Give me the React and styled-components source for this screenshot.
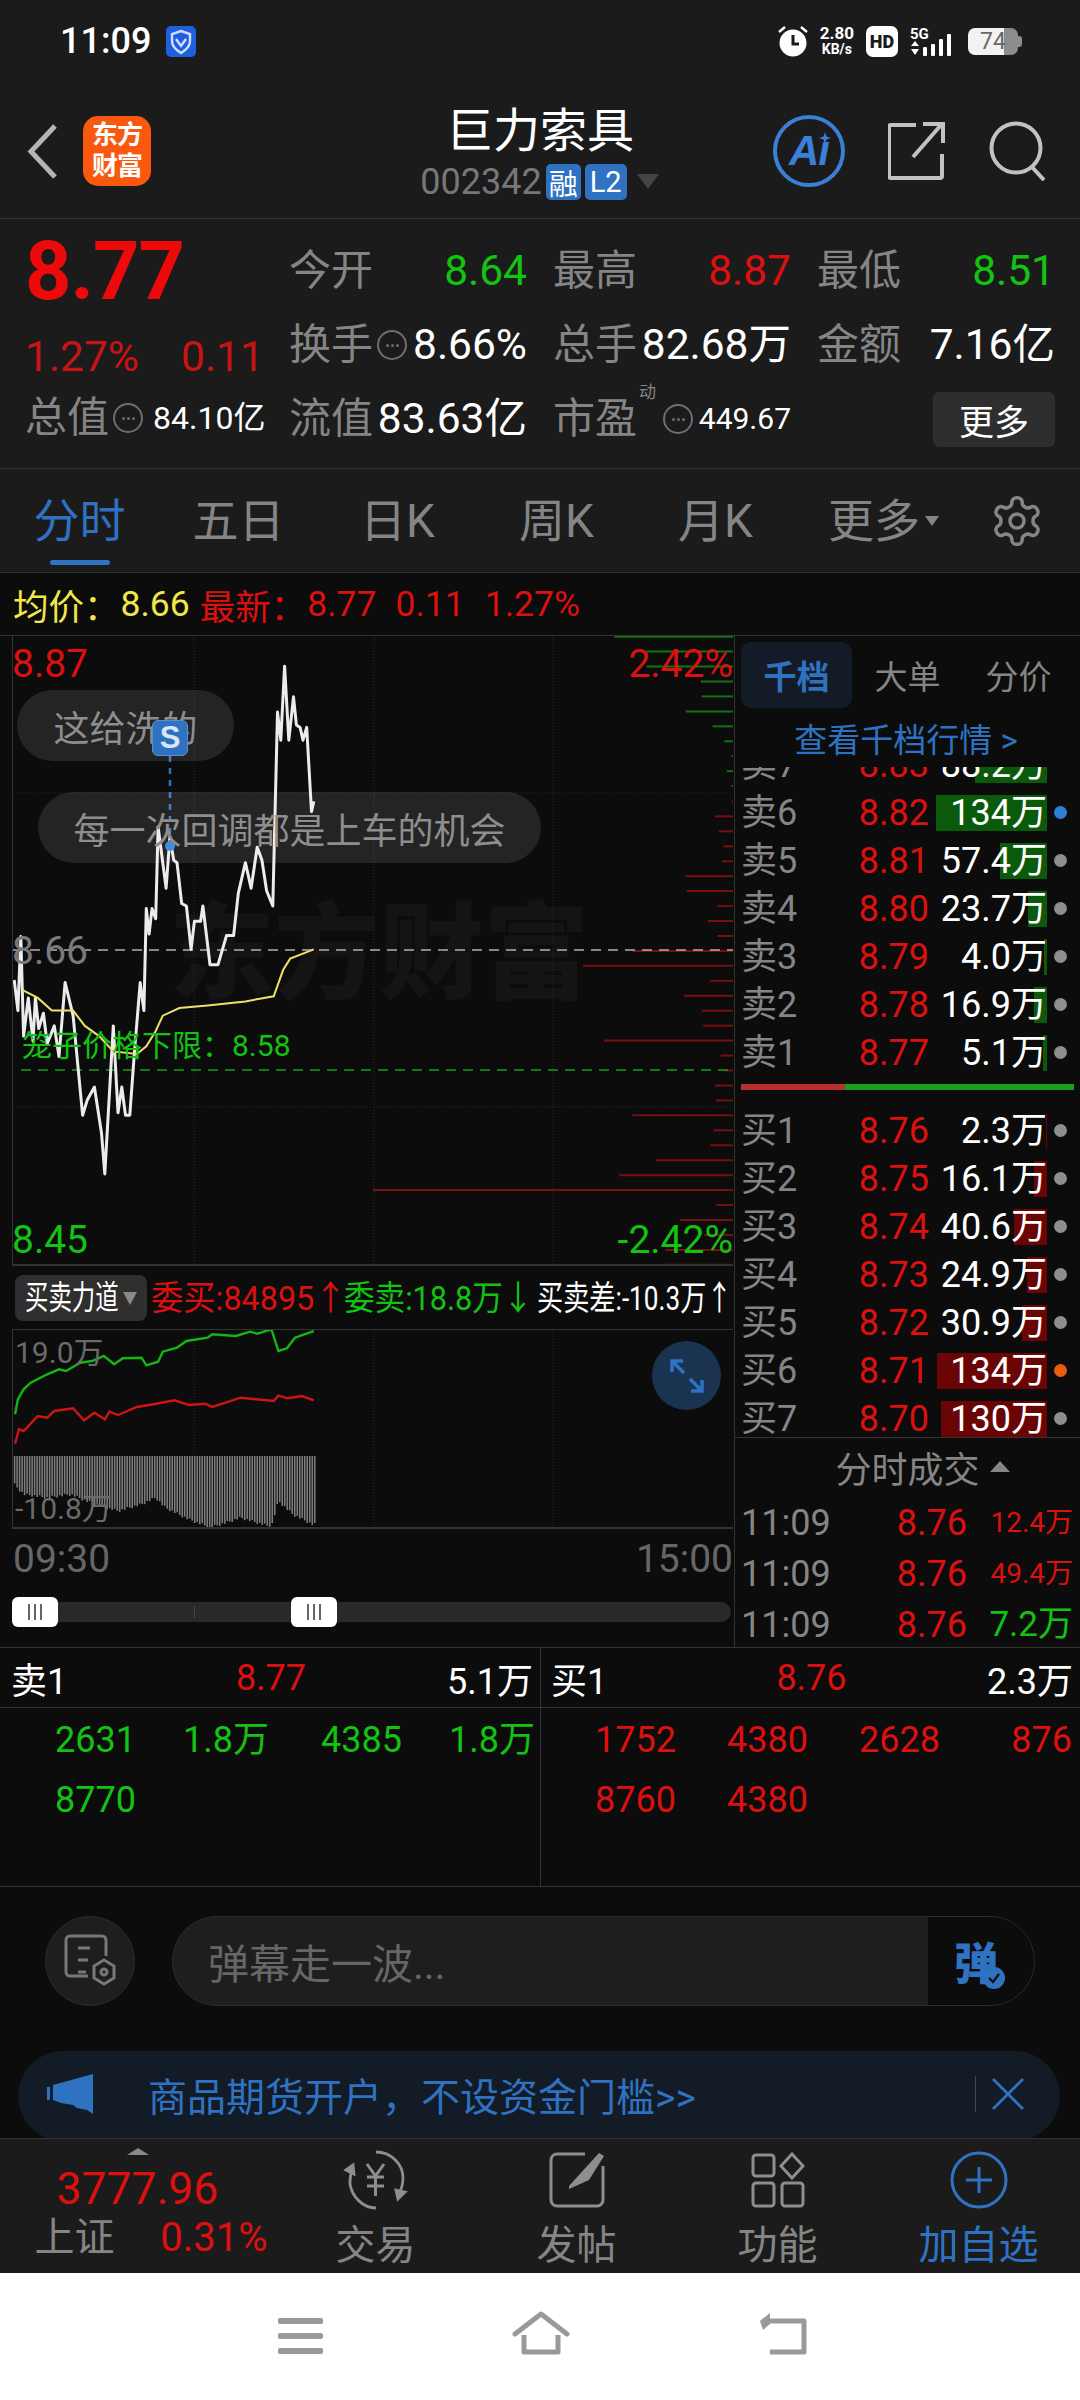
import React from "react";
import styled, { createGlobalStyle } from "styled-components";

const RED = "#dd1010";
const GREEN = "#14c214";
const BLUE = "#2f72c2";
const GRAY = "#858585";
const PANEL = "#0c0c0c";
const BAR = "#1b1b1b";
const LINE = "#333333";

const Global = createGlobalStyle`
  html, body { margin: 0; padding: 0; background: ${PANEL}; }
  * { box-sizing: border-box; }
  body { font-family: Roboto, "Noto Sans CJK SC", sans-serif; }
`;

const Page = styled.div`
  width: 1080px; height: 2400px; overflow: hidden; display: flex; flex-direction: column;
  background: ${PANEL}; color: #fff; font-family: Roboto, "Noto Sans CJK SC", sans-serif;
`;

/* status bar */
const StatusBar = styled.div`
  height: 80px; background: ${BAR}; display: flex; align-items: center; padding: 2px 62px 0 60px; flex: none;
`;
const Clock = styled.span`font-size: 36px; font-weight: 500; color: #fff; margin-right: 15px;`;
const StatusRight = styled.div`margin-left: auto; display: flex; align-items: center; gap: 12px;`;
const Speed = styled.div`
  display: flex; flex-direction: column; align-items: center; font-weight: 700; color: #fff; line-height: 16px;
  span:first-child { font-size: 17px; } span:last-child { font-size: 14px; }
`;
const HdBadge = styled.span`
  width: 32px; height: 31px; border-radius: 7px; background: #fff; color: ${BAR}; font-size: 18px; font-weight: 900;
  display: flex; align-items: center; justify-content: center;
`;
const Battery = styled.div`
  position: relative; width: 50px; height: 27px; border-radius: 7px; margin-left: 0;
  background: linear-gradient(90deg, #f2f2f2 72%, #8c8c8c 72%); color: #666; font-size: 23px; display: flex; align-items: center; justify-content: center;
  &::after { content: ""; position: absolute; right: -4px; top: 8px; width: 4px; height: 11px; border-radius: 0 3px 3px 0; background: #8c8c8c; }
`;

/* header */
const Header = styled.header`
  height: 139px; flex: none; background: ${BAR}; border-bottom: 1px solid ${LINE}; display: grid; grid-template-columns: 270px 1fr 270px; align-items: center;
`;
const HeaderLeft = styled.div`display: flex; align-items: center; padding: 4px 0 0 27px; gap: 25px;`;
const Logo = styled.div`
  width: 68px; height: 70px; border-radius: 15px; background: #f8590f; color: #fff; font-weight: 700; font-size: 26px; line-height: 31px; text-align: center; padding-top: 4px; letter-spacing: -1px;
`;
const TitleBlock = styled.div`display: flex; flex-direction: column; align-items: center; padding-top: 9px;`;
const Title = styled.div`font-size: 47px; line-height: 56px; color: #fff; margin-top: -3px;`;
const CodeLine = styled.div`display: flex; align-items: center; gap: 4px; height: 40px; margin-top: 3px; margin-left: -1px;`;
const Code = styled.span`font-size: 36px; color: #777;`;
const Tag = styled.span`
  height: 36px; border-radius: 5px; background: ${BLUE}; color: #fff; font-size: ${p => p.$s || 28}px; padding: 0 ${p => p.$pad || 4}px; display: flex; align-items: center;
`;
const Caret = styled.span`
  width: 0; height: 0; border-left: 11px solid transparent; border-right: 11px solid transparent; border-top: 15px solid #444; margin-left: 6px;
`;
const HeaderRight = styled.div`display: flex; align-items: center; padding: 4px 0 0 0; margin-left: -37px; gap: 43px;`;
const AiCircle = styled.div`
  position: relative; width: 72px; height: 72px; border-radius: 50%; border: 4px solid #3a7fd8; color: #3a7fd8; font-size: 42px; font-weight: 900; font-style: italic; display: flex; align-items: center; justify-content: center; font-family: "Liberation Sans", sans-serif; flex: none; letter-spacing: -1px;
`;
const AiSpark = styled.svg`position: absolute; right: 10px; top: 13px;`;

/* quote */
const Quote = styled.section`
  height: 250px; flex: none; background: ${BAR}; border-bottom: 1px solid ${LINE}; display: grid; grid-template-columns: 289px 1fr; padding-top: 15px;
`;
const QuoteLeft = styled.div`padding-left: 25px; display: flex; flex-direction: column;`;
const BigPrice = styled.div`font-size: 81px; font-weight: 700; color: #ee0a0a; line-height: 74px; height: 78px; margin-top: 1px; letter-spacing: -1px;`;
const ChangeLine = styled.div`display: flex; gap: 42px; font-size: 42.5px; color: #c81414; line-height: 60px; margin-top: 14px;`;
const CapLine = styled.div`display: flex; align-items: center; height: 60px; margin-top: 1px;`;
const Stats = styled.div`display: grid; grid-template-columns: repeat(3, 238px); column-gap: 26px; grid-auto-rows: 74px; padding-top: 0;`;
const Stat = styled.div`display: flex; align-items: center; justify-content: space-between; white-space: nowrap;`;
const Label = styled.span`font-size: 42px; color: ${GRAY}; line-height: 1;`;
const LabelWrap = styled.span`display: flex; align-items: center; gap: 4px; position: relative;`;
const Sup = styled.sup`position: absolute; left: 86px; top: -14px; font-size: 17px; color: ${GRAY}; line-height: 1;`;
const Value = styled.span`font-size: ${p => p.$s || 42.5}px; color: ${p => p.$c || "#fff"}; line-height: 1; margin-left: ${p => p.$m || 0}px;`;
const More = styled.button`
  width: 122px; height: 55px; border: 0; border-radius: 6px; background: #2e2e2e; color: #fff; font: inherit; font-size: 35px; margin-left: 116px; padding: 0; font-family: Roboto, "Noto Sans CJK SC", sans-serif;
`;
const Dots = styled.span`
  width: 30px; height: 30px; border-radius: 50%; border: 2px solid #6e6e6e; display: inline-flex; align-items: center; justify-content: center; gap: 2px; flex: none; margin-left: ${p => p.$m || 0}px;
  i { width: 3px; height: 3px; border-radius: 50%; background: #6e6e6e; display: block; }
`;
const DotsIcon = ({ m }) => <Dots $m={m}><i /><i /><i /></Dots>;

/* tabs */
const Tabs = styled.nav`
  height: 104px; flex: none; background: ${BAR}; border-bottom: 1px solid ${LINE}; display: grid; grid-template-columns: repeat(6, 159px) 126px; align-items: center;
`;
const Tab = styled.div`
  position: relative; text-align: center; font-size: 46px; line-height: 1; color: ${p => (p.$on ? BLUE : GRAY)}; margin-top: 1px; margin-left: ${p => p.$m || 0}px; display: flex; justify-content: center; align-items: center;
  ${p => p.$on && `&::after { content: ""; position: absolute; left: 50px; width: 60px; height: 5px; border-radius: 3px; background: ${BLUE}; bottom: -21px; }`}
`;
const TabCaret = styled.span`
  width: 0; height: 0; border-left: 7px solid transparent; border-right: 7px solid transparent; border-top: 10px solid ${GRAY}; margin-left: 5px;
`;

/* average row */
const AvgRow = styled.div`
  height: 63px; flex: none; background: ${PANEL}; border-bottom: 1px solid ${LINE}; display: flex; align-items: center; font-size: 35.5px; padding-left: 13px; white-space: nowrap;
`;
const AvgPart = styled.span`color: ${p => p.$c}; margin-left: ${p => p.$m || 0}px;`;

/* middle */
const Middle = styled.div`height: 1012px; flex: none; display: flex; border-bottom: 1px solid ${LINE};`;
const LeftCol = styled.div`width: 734px; flex: none; display: flex; flex-direction: column;`;
const RightCol = styled.div`width: 346px; flex: none; border-left: 1px solid ${LINE}; display: flex; flex-direction: column; overflow: hidden;`;

const MainChart = styled.div`
  position: relative; height: 630px; flex: none; margin-left: 12px; width: 721px; border-left: 1px solid ${LINE}; border-bottom: 2px solid ${LINE}; overflow: hidden;
`;
const ChartSvg = styled.svg`position: absolute; left: 0; top: 0; display: block;`;
const Watermark = styled.div`
  position: absolute; left: 156px; top: 256px; font-size: 105px; font-weight: 900; color: #141414; line-height: 1.2; white-space: nowrap;
`;
const ChartLabel = styled.span`
  position: absolute; font-size: ${p => p.$s || 39}px; line-height: 1; color: ${p => p.$c}; white-space: nowrap;
  ${p => (p.$r !== undefined ? `right: ${p.$r}px;` : `left: ${p.$l}px;`)} top: ${p => p.$t}px;
`;
const Pill = styled.div`
  position: absolute; left: ${p => p.$l}px; top: ${p => p.$t}px; width: ${p => p.$w}px; height: 71px; border-radius: 36px; background: rgba(255,255,255,.1); color: #8e8e8e; font-size: 36px; display: flex; align-items: center; justify-content: center; white-space: nowrap;
`;
const SBadge = styled.div`
  position: absolute; left: 139px; top: 84px; width: 36px; height: 36px; border-radius: 6px; background: ${BLUE}; border: 1px solid #5d8fcc; color: #d8e6f8; font-size: 31px; font-weight: 900; display: flex; align-items: center; justify-content: center; font-family: "Liberation Sans", sans-serif;
`;

const ForceRow = styled.div`height: 63px; flex: none; display: flex; align-items: center; padding-left: 15px; white-space: nowrap;`;
const ForceSelect = styled.div`
  width: 132px; height: 46px; flex: none; border-radius: 8px; background: #2f2f2f; position: relative; overflow: hidden; margin-right: 4px;
`;
const Squeezed = styled.span`
  display: inline-block; transform: scaleX(${p => p.$sx}); transform-origin: left center; font-size: ${p => p.$s || 34}px; color: ${p => p.$c || "#fff"}; line-height: 46px;
`;
const SelectText = styled(Squeezed)`position: absolute; left: 10px; top: 0;`;
const SelectCaret = styled.span`
  position: absolute; right: 10px; top: 17px; width: 0; height: 0; border-left: 7px solid transparent; border-right: 7px solid transparent; border-top: 13px solid #8a8a8a;
`;
const ForceItem = styled.span`width: ${p => p.$w}px; flex: none; display: block; overflow: visible;`;

const SubChart = styled.div`
  position: relative; height: 200px; flex: none; margin-left: 12px; width: 721px; border-left: 1px solid ${LINE}; border-top: 1px solid ${LINE}; border-bottom: 2px solid ${LINE}; overflow: hidden;
`;
const Expand = styled.div`
  position: absolute; left: 639px; top: 11px; width: 69px; height: 69px; border-radius: 50%; background: #1a3350; display: flex; align-items: center; justify-content: center;
`;
const TimeRow = styled.div`
  height: 60px; flex: none; display: flex; justify-content: space-between; align-items: center; padding: 0 1px 0 13px; font-size: 39px; color: #666;
`;
const Slider = styled.div`position: relative; height: 30px; margin: 8px 3px 0 12px; flex: none;`;
const Track = styled.div`position: absolute; left: 0; right: 0; top: 5px; height: 20px; border-radius: 10px; background: #292929;`;
const Tick = styled.div`position: absolute; left: 182px; top: 9px; width: 1px; height: 12px; background: #444;`;
const Handle = styled.div`
  position: absolute; left: ${p => p.$l}px; top: 0; width: 46px; height: 30px; border-radius: 6px; background: #fff; display: flex; align-items: center; justify-content: center; gap: 4px;
  i { width: 2px; height: 16px; background: #666; display: block; }
`;

/* order book */
const BookTabs = styled.div`height: 72px; flex: none; display: grid; grid-template-columns: 111px 111px 111px; padding: 6px 0 0 6px;`;
const BookTab = styled.div`
  height: 66px; border-radius: 10px; background: ${p => (p.$on ? "#131c26" : "transparent")}; color: ${p => (p.$on ? BLUE : GRAY)}; font-size: 33px; font-weight: ${p => (p.$on ? 700 : 400)}; display: flex; align-items: center; justify-content: center;
`;
const BookLink = styled.div`height: 59px; flex: none; color: ${BLUE}; font-size: 33px; display: flex; align-items: center; justify-content: center; margin-left: -3px;`;
const SellList = styled.div`height: 310px; flex: none; overflow: hidden; display: flex; flex-direction: column; justify-content: flex-end;`;
const BuyList = styled.div`height: 330px; flex: none; overflow: hidden; display: flex; flex-direction: column;`;
const BookRow = styled.div`
  position: relative; height: 48px; flex: none; display: grid; grid-template-columns: 6px 70px 118px 118px 12px; align-items: center; font-size: 36px; line-height: 1; white-space: nowrap;
`;
const RowLabel = styled.span`grid-column: 2; color: ${GRAY}; position: relative;`;
const RowPrice = styled.span`color: ${RED}; text-align: right; position: relative;`;
const RowVol = styled.span`color: #fff; text-align: right; position: relative;`;
const VolBar = styled.span`
  position: absolute; right: 33px; top: 6px; height: 36px; background: ${p => (p.$sell ? "#0b5a0b" : "#6b0505")};
`;
const RowDot = styled.span`
  position: absolute; left: 319px; top: 17px; width: 13px; height: 13px; border-radius: 50%; background: ${p => p.$c || "#8e8e93"};
`;
const Ratio = styled.div`height: 6px; margin: 7px 6px 17px 6px; flex: none; display: flex;`;
const RatioPart = styled.span`height: 6px; background: ${p => p.$c}; flex: ${p => p.$f};`;
const TradesHead = styled.div`
  height: 60px; flex: none; border-top: 1px solid ${LINE}; color: ${GRAY}; font-size: 36px; display: flex; align-items: center; justify-content: center; gap: 10px; padding: 0 0 2px 30px;
`;
const UpTri = styled.span`
  width: 0; height: 0; border-left: ${p => p.$w}px solid transparent; border-right: ${p => p.$w}px solid transparent; border-bottom: ${p => p.$h}px solid ${p => p.$c};
`;
const TradeRow = styled.div`
  height: 51px; flex: none; display: grid; grid-template-columns: 6px 110px 116px 106px; align-items: center; line-height: 1; font-size: 36px; white-space: nowrap;
`;
const TradeTime = styled.span`grid-column: 2; color: ${GRAY};`;
const TradePrice = styled.span`color: ${RED}; text-align: right;`;
const TradeVol = styled.span`color: ${p => p.$c}; text-align: right; font-size: ${p => p.$s}px;`;

/* level 2 */
const Levels = styled.section`height: 239px; flex: none; display: grid; grid-template-columns: 541px 539px; border-bottom: 1px solid ${LINE};`;
const LevelSide = styled.div`border-right: ${p => (p.$first ? `1px solid ${LINE}` : "0")}; display: flex; flex-direction: column;`;
const LevelHead = styled.div`
  height: 60px; flex: none; border-bottom: 1px solid ${LINE}; display: grid; grid-template-columns: 1fr 1fr 1fr; align-items: center; font-size: 36px; padding: 0 ${p => p.$pr}px 0 ${p => p.$pl}px;
  span:nth-child(2) { color: ${RED}; text-align: center; margin-left: ${p => p.$mid}px; } span:nth-child(3) { text-align: right; }
`;
const LevelGrid = styled.div`
  display: grid; grid-template-columns: repeat(4, ${p => p.$col}px); grid-auto-rows: 60px; padding: 2px 0 0 ${p => p.$pl}px; align-items: center; font-size: 36px; color: ${p => p.$c}; text-align: right; line-height: 1;
`;

/* danmu */
const Danmu = styled.div`height: 120px; flex: none; display: flex; padding: 29px 0 0 45px; align-items: flex-start; gap: 37px;`;
const RoundBtn = styled.div`
  width: 90px; height: 90px; border-radius: 50%; background: #1e1e1e; border: 1px solid #2b2b2b; display: flex; align-items: center; justify-content: center; flex: none;
`;
const Input = styled.div`
  width: 863px; height: 90px; border-radius: 45px; background: #1e1e1e; border: 1px solid #2c2c2c; display: flex; overflow: hidden; flex: none;
`;
const Placeholder = styled.div`flex: 1; color: #666; font-size: 41px; display: flex; align-items: center; padding-left: 35px;`;
const SendBox = styled.div`
  position: relative; width: 106px; background: ${PANEL}; display: flex; align-items: center; color: ${BLUE}; font-size: 44px; font-weight: 900; padding-left: 26px;
`;
const Check = styled.span`
  position: absolute; left: 55px; top: 50px; width: 22px; height: 22px; border-radius: 50%; background: ${BLUE}; display: flex; align-items: center; justify-content: center;
`;

const BannerBg = styled.div`height: 131px; flex: none; overflow: hidden; padding: 44px 20px 0 18px;`;
const Banner = styled.div`
  width: 1042px; height: 90px; border-radius: 45px; background: #121b26; display: flex; align-items: center; padding: 0 35px 4px 29px;
`;
const BannerText = styled.span`font-size: 39px; color: ${BLUE}; margin-left: 55px; white-space: nowrap; flex: 1;`;
const BannerDiv = styled.span`width: 1px; height: 36px; background: #3d4a59; margin-right: 15px;`;

/* bottom bar */
const BottomBar = styled.div`
  height: 135px; flex: none; background: ${BAR}; border-top: 1px solid ${LINE}; display: grid; grid-template-columns: 275px repeat(4, 201px);
`;
const IndexBox = styled.div`display: flex; flex-direction: column; padding-top: 9px; align-items: center; position: relative;`;
const IndexValue = styled.div`font-size: 44.5px; color: ${RED}; line-height: 46px; margin-top: 11px;`;
const IndexLine = styled.div`display: flex; align-items: center; justify-content: space-between; width: 233px; margin-left: 27px; line-height: 1; margin-top: 6px;`;
const IndexName = styled.span`font-size: 40px; color: ${GRAY}; line-height: 1;`;
const BarItem = styled.div`
  display: flex; flex-direction: column; align-items: center; color: ${p => (p.$on ? BLUE : GRAY)}; font-size: 40px; line-height: 1; padding-top: 10px;
`;
const BarIcon = styled.div`height: 62px; margin-bottom: 15px; display: flex; align-items: center; justify-content: center;`;

const NavBar = styled.div`
  height: 127px; flex: none; background: #fff; display: flex; justify-content: center; align-items: flex-start; padding: 38px 0 0 6px; gap: 188px;
`;

/* data */
const mx = x => x / 2.119 - 13;
const my = y => y / 1.96 + 480 - 636;
const toPts = a => a.map(([x, y]) => `${mx(x).toFixed(1)},${my(y).toFixed(1)}`).join(" ");
const sx = x => x / 2.119 - 13;
const sy = y => y / 3 + 1260 - 1329;
const toSub = a => a.map(([x, y]) => `${sx(x).toFixed(1)},${sy(y).toFixed(1)}`).join(" ");

const priceLine = [[30,980],[38,1040],[44,895],[50,1090],[60,1015],[70,1100],[75,1015],[82,1075],[92,1045],[100,1105],[115,1070],[125,1130],[138,985],[155,1050],[175,1245],[185,1215],[200,1190],[215,1280],[222,1360],[240,1070],[250,1240],[258,1190],[266,1245],[275,1245],[285,1120],[297,985],[305,1040],[310,840],[316,890],[322,840],[330,860],[335,680],[352,800],[360,700],[368,745],[375,750],[385,830],[395,835],[405,920],[412,865],[425,865],[430,835],[445,950],[462,950],[480,893],[495,893],[505,810],[520,750],[532,800],[545,720],[555,745],[565,805],[578,835],[588,455],[595,510],[603,365],[612,510],[622,425],[628,480],[636,485],[642,510],[650,485],[660,650],[665,630]];
const avgLine = [[48,1000],[80,1015],[110,1040],[155,1040],[180,1070],[210,1090],[240,1120],[290,1125],[310,1110],[330,1080],[345,1050],[380,1035],[440,1030],[520,1022],[580,1012],[600,960],[615,938],[665,920]];
const greenDepth = [1302,1370,1370,1485,1487,1453,1510,1535,1550,1540,1550];
const redDepth = [1550,1515,1523,1533,1530,1453,1455,1520,1500,1520,1340,1235,1505,1450,1487,1490,1280,1527,1533,1515,1517,1340,1512,1505,1390,1312,790,1518,1440,1493,1410,1410];
const buyForce = [[32,548],[40,505],[50,510],[80,465],[100,470],[115,450],[155,442],[178,478],[200,455],[222,475],[232,452],[250,462],[290,438],[325,430],[370,418],[400,432],[435,428],[450,438],[510,410],[580,420],[590,404],[610,412],[640,405],[665,418]];
const sellForce = [[32,460],[38,415],[50,385],[65,365],[100,340],[125,325],[140,330],[170,305],[195,300],[220,285],[242,310],[260,292],[300,290],[310,313],[335,302],[345,272],[375,260],[395,240],[440,230],[450,220],[500,225],[530,212],[545,218],[575,205],[590,270],[608,262],[625,230],[665,210]];
const diffEnv = [[30,670],[50,700],[100,710],[150,700],[200,730],[250,750],[300,730],[330,710],[350,740],[400,775],[445,800],[480,785],[510,770],[575,798],[590,720],[620,760],[665,792]];
const envAt = x => {
  for (let i = 1; i < diffEnv.length; i++) {
    const [x0, y0] = diffEnv[i - 1];
    const [x1, y1] = diffEnv[i];
    if (x <= x1) return y0 + ((y1 - y0) * (x - x0)) / (x1 - x0);
  }
  return 790;
};
const diffBars = [];
for (let x = 31; x <= 667; x += 5.3) diffBars.push(x);

const sells = [
  ["卖7", "8.83", "88.2万", 72], ["卖6", "8.82", "134万", 111, "#2f7fd6"], ["卖5", "8.81", "57.4万", 47], ["卖4", "8.80", "23.7万", 19],
  ["卖3", "8.79", "4.0万", 3], ["卖2", "8.78", "16.9万", 13], ["卖1", "8.77", "5.1万", 4],
];
const buys = [
  ["买1", "8.76", "2.3万", 1], ["买2", "8.75", "16.1万", 13], ["买3", "8.74", "40.6万", 33], ["买4", "8.73", "24.9万", 20],
  ["买5", "8.72", "30.9万", 25], ["买6", "8.71", "134万", 110, "#e85d10"], ["买7", "8.70", "130万", 106],
];
const trades = [["12.4万", RED, 28], ["49.4万", RED, 28], ["7.2万", GREEN, 35]];

const Row = ({ r, sell }) => (
  <BookRow>
    <VolBar $sell={sell} style={{ width: r[3] }} />
    <RowLabel>{r[0]}</RowLabel>
    <RowPrice>{r[1]}</RowPrice>
    <RowVol>{r[2]}</RowVol>
    {!(sell && r[0] === "卖7") && <RowDot $c={r[4]} />}
  </BookRow>
);

const Chevron = () => (
  <svg width="31" height="55" viewBox="0 0 31 55"><path d="M28 2 L4 27.5 L28 53" fill="none" stroke="#b5b5b5" strokeWidth="5" /></svg>
);
const ShareIcon = () => (
  <svg width="58" height="60" viewBox="0 0 58 60" fill="none" stroke="#c2c2c2" strokeWidth="4" style={{ flex: "none" }}>
    <path d="M28 4 H3 a2 2 0 0 0 -2 2 V55 a2 2 0 0 0 2 2 H52 a2 2 0 0 0 2 -2 V33" />
    <path d="M25 36 L53 4 M35 3 H55 V22" />
  </svg>
);
const SearchIcon = () => (
  <svg width="60" height="60" viewBox="0 0 60 60" fill="none" stroke="#c2c2c2" strokeWidth="4" style={{ flex: "none" }}><circle cx="27" cy="27" r="24.5" /><path d="M43 46 L55 59" /></svg>
);
const Gear = () => (
  <svg width="56" height="56" viewBox="0 0 24 24" fill="none" stroke="#858585" strokeWidth="1.5" style={{ flex: "none" }}><path d="M12.22 2h-.44a2 2 0 0 0-2 2v.18a2 2 0 0 1-1 1.73l-.43.25a2 2 0 0 1-2 0l-.15-.08a2 2 0 0 0-2.73.73l-.22.38a2 2 0 0 0 .73 2.73l.15.1a2 2 0 0 1 1 1.72v.51a2 2 0 0 1-1 1.74l-.15.09a2 2 0 0 0-.73 2.73l.22.38a2 2 0 0 0 2.73.73l.15-.08a2 2 0 0 1 2 0l.43.25a2 2 0 0 1 1 1.73V20a2 2 0 0 0 2 2h.44a2 2 0 0 0 2-2v-.18a2 2 0 0 1 1-1.73l.43-.25a2 2 0 0 1 2 0l.15.08a2 2 0 0 0 2.73-.73l.22-.39a2 2 0 0 0-.73-2.73l-.15-.08a2 2 0 0 1-1-1.74v-.5a2 2 0 0 1 1-1.74l.15-.09a2 2 0 0 0 .73-2.73l-.22-.38a2 2 0 0 0-2.73-.73l-.15.08a2 2 0 0 1-2 0l-.43-.25a2 2 0 0 1-1-1.73V4a2 2 0 0 0-2-2z"/><circle cx="12" cy="12" r="3"/></svg>
);

export default function App() {
  return (
    <Page>
      <Global />
      <StatusBar>
        <Clock>11:09</Clock>
        <svg width="30" height="31" viewBox="0 0 30 31"><rect width="30" height="31" rx="5" fill="#1f5fe0" /><path d="M15 5 L24 8 V15 C24 20 20 24 15 27 C10 24 6 20 6 15 V8 Z" fill="none" stroke="#cfe0ff" strokeWidth="2.4" /><path d="M10 13 L15 20 L20 13" fill="none" stroke="#cfe0ff" strokeWidth="2.4" /></svg>
        <StatusRight>
          <svg width="30" height="31" viewBox="0 0 30 31"><circle cx="15" cy="17" r="13.5" fill="#fff" /><path d="M15 9 V18 H21" stroke="#1b1b1b" strokeWidth="3" fill="none" /><path d="M1 6 L7 1 M29 6 L23 1" stroke="#fff" strokeWidth="2.4" /></svg>
          <Speed><span>2.80</span><span>KB/s</span></Speed>
          <HdBadge>HD</HdBadge>
          <svg width="46" height="32" viewBox="0 0 46 32" fill="#fff">
            <text x="0" y="14" fontSize="15" fontWeight="700" fontFamily="Roboto">5G</text>
            <path d="M1 21 L5 16 L9 21 Z M1 24 H9 L5 30 Z" />
            <rect x="13" y="22" width="4" height="9" rx="1" /><rect x="21" y="19" width="4" height="12" rx="1" /><rect x="29" y="14" width="4" height="17" rx="1" /><rect x="37" y="9" width="4" height="22" rx="1" />
          </svg>
          <Battery>74</Battery>
        </StatusRight>
      </StatusBar>

      <Header>
        <HeaderLeft>
          <Chevron />
          <Logo>东方<br />财富</Logo>
        </HeaderLeft>
        <TitleBlock>
          <Title>巨力索具</Title>
          <CodeLine>
            <Code>002342</Code>
            <Tag $s={29} $pad={3}>融</Tag>
            <Tag $s={29} $pad={5}>L2</Tag>
            <Caret />
          </CodeLine>
        </TitleBlock>
        <HeaderRight>
          <AiCircle>
            Aı
            <AiSpark width="12" height="12" viewBox="0 0 12 12"><path d="M6 0 L7.5 4.5 L12 6 L7.5 7.5 L6 12 L4.5 7.5 L0 6 L4.5 4.5 Z" fill="#3a7fd8" /></AiSpark>
          </AiCircle>
          <ShareIcon />
          <SearchIcon />
        </HeaderRight>
      </Header>

      <Quote>
        <QuoteLeft>
          <BigPrice>8.77</BigPrice>
          <ChangeLine><span>1.27%</span><span>0.11</span></ChangeLine>
          <CapLine>
            <LabelWrap><Label>总值</Label><DotsIcon /></LabelWrap>
            <Value $s={32} $m={10}>84.10亿</Value>
          </CapLine>
        </QuoteLeft>
        <Stats>
          <Stat><Label>今开</Label><Value $c={GREEN}>8.64</Value></Stat>
          <Stat><Label>最高</Label><Value $c={RED}>8.87</Value></Stat>
          <Stat><Label>最低</Label><Value $c={GREEN}>8.51</Value></Stat>
          <Stat><LabelWrap><Label>换手</Label><DotsIcon /></LabelWrap><Value>8.66%</Value></Stat>
          <Stat><Label>总手</Label><Value>82.68万</Value></Stat>
          <Stat><Label>金额</Label><Value>7.16亿</Value></Stat>
          <Stat><Label>流值</Label><Value>83.63亿</Value></Stat>
          <Stat><LabelWrap><Label>市盈</Label><Sup>动</Sup><DotsIcon m={22} /></LabelWrap><Value $s={30}>449.67</Value></Stat>
          <Stat><More>更多</More></Stat>
        </Stats>
      </Quote>

      <Tabs>
        <Tab $on>分时</Tab>
        <Tab>五日</Tab>
        <Tab>日K</Tab>
        <Tab>周K</Tab>
        <Tab>月K</Tab>
        <Tab $m={18}>更多<TabCaret /></Tab>
        <Tab><Gear /></Tab>
      </Tabs>

      <AvgRow>
        <AvgPart $c="#f2e64a">均价：</AvgPart>
        <AvgPart $c="#f2e64a" $m={1}>8.66</AvgPart>
        <AvgPart $c={RED} $m={10}>最新：</AvgPart>
        <AvgPart $c={RED} $m={1}>8.77</AvgPart>
        <AvgPart $c={RED} $m={19}>0.11</AvgPart>
        <AvgPart $c={RED} $m={20}>1.27%</AvgPart>
      </AvgRow>

      <Middle>
        <LeftCol>
          <MainChart>
            <Watermark>东方财富</Watermark>
            <ChartSvg width="720" height="628" viewBox="0 0 720 628">
              {[181, 361, 540].map(x => <line key={x} x1={x} x2={x} y1="0" y2="628" stroke="#2a2a2a" strokeDasharray="1 2" />)}
              {[157, 471].map(y => <line key={y} x1="0" x2="720" y1={y} y2={y} stroke="#2a2a2a" strokeDasharray="1 2" />)}
              {greenDepth.map((x, i) => <line key={i} x1={mx(x)} x2="720" y1={my(307 + i * 29.3)} y2={my(307 + i * 29.3)} stroke="#127212" strokeWidth="2" />)}
              {redDepth.map((x, i) => <line key={i} x1={mx(x)} x2="720" y1={my(630 + i * 29.3)} y2={my(630 + i * 29.3)} stroke="#7a0f0f" strokeWidth="2" />)}
              <line x1="0" x2="720" y1="314" y2="314" stroke="#b0b0b0" strokeWidth="1.5" strokeDasharray="10 7" />
              <line x1="8" x2="716" y1="434" y2="434" stroke="#1a9a1a" strokeWidth="1.5" strokeDasharray="10 7" />
              <polyline points={toPts(priceLine)} fill="none" stroke="#ececec" strokeWidth="3" strokeLinejoin="round" />
              <polyline points={toPts(avgLine)} fill="none" stroke="#efe06a" strokeWidth="2" />
              <line x1="157" x2="157" y1="120" y2="210" stroke={BLUE} strokeWidth="2.5" strokeDasharray="6 6" />
              <circle cx="157" cy="210" r="5" fill="#2f7fe0" />
            </ChartSvg>
            <ChartLabel $c={RED} $l={-1} $t={9}>8.87</ChartLabel>
            <ChartLabel $c={RED} $r={0} $t={9}>2.42%</ChartLabel>
            <ChartLabel $c="#7a7a7a" $l={-1} $t={296}>8.66</ChartLabel>
            <ChartLabel $c={GREEN} $l={9} $t={395} $s={30}>笼子价格下限：8.58</ChartLabel>
            <ChartLabel $c={GREEN} $l={-1} $t={585}>8.45</ChartLabel>
            <ChartLabel $c={GREEN} $r={0} $t={585}>-2.42%</ChartLabel>
            <Pill $l={4} $t={54} $w={217}>这给洗的</Pill>
            <Pill $l={25} $t={156} $w={503}>每一次回调都是上车的机会</Pill>
            <SBadge>S</SBadge>
          </MainChart>

          <ForceRow>
            <ForceSelect><SelectText $s={33} $sx={0.71}>买卖力道</SelectText><SelectCaret /></ForceSelect>
            <ForceItem $w={193}><Squeezed $c={RED} $sx={0.95}>委买:84895↑</Squeezed></ForceItem>
            <ForceItem $w={193}><Squeezed $c={GREEN} $sx={0.9}>委卖:18.8万↓</Squeezed></ForceItem>
            <ForceItem $w={190}><Squeezed $sx={0.77}>买卖差:-10.3万↑</Squeezed></ForceItem>
          </ForceRow>

          <SubChart>
            <ChartSvg width="720" height="198" viewBox="0 0 720 198">
              {[181, 361, 540].map(x => <line key={x} x1={x} x2={x} y1="0" y2="198" stroke="#2a2a2a" strokeDasharray="1 2" />)}
              {diffBars.map((x, i) => <line key={x} x1={sx(x)} x2={sx(x)} y1={sy(585)} y2={sy(envAt(x) + ((i * 7) % 5) * 2 - 4)} stroke="#7c7c7c" strokeWidth="1.6" />)}
              <polyline points={toSub(sellForce)} fill="none" stroke="#16b516" strokeWidth="2.4" />
              <polyline points={toSub(buyForce)} fill="none" stroke="#cf1414" strokeWidth="2.4" />
            </ChartSvg>
            <ChartLabel $c="#6a6a6a" $l={2} $t={8} $s={30}>19.0万</ChartLabel>
            <ChartLabel $c="#6a6a6a" $l={2} $t={164} $s={30}>-10.8万</ChartLabel>
            <Expand>
              <svg width="36" height="36" viewBox="0 0 36 36" fill="none" stroke={BLUE} strokeWidth="3.5"><path d="M3 14 V3 H14 M3 3 L15 15 M33 22 V33 H22 M33 33 L21 21" /></svg>
            </Expand>
          </SubChart>

          <TimeRow><span>09:30</span><span>15:00</span></TimeRow>
          <Slider>
            <Track />
            <Tick />
            <Handle $l={0}><i /><i /><i /></Handle>
            <Handle $l={279}><i /><i /><i /></Handle>
          </Slider>
        </LeftCol>

        <RightCol>
          <BookTabs>
            <BookTab $on>千档</BookTab>
            <BookTab>大单</BookTab>
            <BookTab>分价</BookTab>
          </BookTabs>
          <BookLink>查看千档行情 &gt;</BookLink>
          <SellList>{sells.map(r => <Row key={r[0]} r={r} sell />)}</SellList>
          <Ratio><RatioPart $c="#b92e2e" $f={104} /><RatioPart $c="#1a9e1e" $f={229} /></Ratio>
          <BuyList>{buys.map(r => <Row key={r[0]} r={r} />)}</BuyList>
          <TradesHead>分时成交<UpTri $w={10} $h={11} $c={GRAY} /></TradesHead>
          {trades.map((t, i) => (
            <TradeRow key={i}>
              <TradeTime>11:09</TradeTime>
              <TradePrice>8.76</TradePrice>
              <TradeVol $c={t[1]} $s={t[2]}>{t[0]}</TradeVol>
            </TradeRow>
          ))}
        </RightCol>
      </Middle>

      <Levels>
        <LevelSide $first>
          <LevelHead $pl={11} $pr={7} $mid={-2}><span>卖1</span><span>8.77</span><span>5.1万</span></LevelHead>
          <LevelGrid $col={133} $pl={3} $c={GREEN}>
            <span>2631</span><span>1.8万</span><span>4385</span><span>1.8万</span><span>8770</span><span /><span /><span />
          </LevelGrid>
        </LevelSide>
        <LevelSide>
          <LevelHead $pl={10} $pr={7} $mid={-1}><span>买1</span><span>8.76</span><span>2.3万</span></LevelHead>
          <LevelGrid $col={132} $pl={3} $c={RED}>
            <span>1752</span><span>4380</span><span>2628</span><span>876</span><span>8760</span><span>4380</span><span /><span />
          </LevelGrid>
        </LevelSide>
      </Levels>

      <Danmu>
        <RoundBtn>
          <svg width="56" height="54" viewBox="0 0 56 54" fill="none" stroke="#777" strokeWidth="3">
            <path d="M44 22 V6 a4 4 0 0 0 -4 -4 H8 a4 4 0 0 0 -4 4 V38 a4 4 0 0 0 4 4 H26" />
            <path d="M16 14 H28 M16 26 H26 M16 38 H24" />
            <path d="M42 26 L52 32 V44 L42 50 L32 44 V32 Z" />
            <circle cx="42" cy="38" r="3" />
          </svg>
        </RoundBtn>
        <Input>
          <Placeholder>弹幕走一波...</Placeholder>
          <SendBox>弹<Check><svg width="14" height="14" viewBox="0 0 14 14"><path d="M2 7 L6 11 L12 3" fill="none" stroke="#111" strokeWidth="2.4" /></svg></Check></SendBox>
        </Input>
      </Danmu>

      <BannerBg>
        <Banner>
          <svg width="46" height="40" viewBox="0 0 46 40" fill={BLUE}><rect x="0" y="13" width="3" height="13" /><path d="M6 11 L46 0 V40 L40 36 L30 34 L26 31 L14 29 L6 26 Z" /></svg>
          <BannerText>商品期货开户，不设资金门槛&gt;&gt;</BannerText>
          <BannerDiv />
          <svg width="34" height="32" viewBox="0 0 34 32" fill="none" stroke={BLUE} strokeWidth="2.8"><path d="M2 1 L32 31 M32 1 L2 31" /></svg>
        </Banner>
      </BannerBg>

      <BottomBar>
        <IndexBox>
          <UpTri $w={11} $h={7} $c="#8a8a8a" />
          <IndexValue>3777.96</IndexValue>
          <IndexLine><IndexName>上证</IndexName><Value $s={40} $c={RED}>0.31%</Value></IndexLine>
        </IndexBox>
        <BarItem>
          <BarIcon>
            <svg width="66" height="60" viewBox="0 0 66 60" fill="none" stroke="#8e8e8e" strokeWidth="2.8">
              <path d="M9 21 C7 25 7 30 7 34 C9 47 20 58 33 58 M33 2 C48 2 60 14 60 28 C60 34 58 40 56 44" />
              <path d="M3 20 L10 15 L11 24 Z M53 40 L62 42 L55 49 Z" fill="#8e8e8e" />
              <path d="M24 14 L32.5 26 L41 14 M32.5 26 V46 M24 27 H41 M24 36 H41" strokeWidth="3" />
            </svg>
          </BarIcon>
          交易
        </BarItem>
        <BarItem>
          <BarIcon>
            <svg width="56" height="56" viewBox="0 0 56 56" fill="none" stroke="#8e8e8e" strokeWidth="3">
              <path d="M36 2 H8 a6 6 0 0 0 -6 6 V48 a6 6 0 0 0 6 6 H48 a6 6 0 0 0 6 -6 V14" />
              <path d="M50 1 L55 4 L40 28 L20 37 L20 34 Z" fill="#8e8e8e" stroke="none" />
            </svg>
          </BarIcon>
          发帖
        </BarItem>
        <BarItem>
          <BarIcon>
            <svg width="54" height="56" viewBox="0 0 54 56" fill="none" stroke="#8e8e8e" strokeWidth="3">
              <rect x="2" y="3" width="21" height="21" rx="3" /><rect x="2" y="31" width="21" height="23" rx="3" /><rect x="31" y="31" width="21" height="23" rx="3" /><path d="M41 2 L52 14 L41 26 L30 14 Z" />
            </svg>
          </BarIcon>
          功能
        </BarItem>
        <BarItem $on>
          <BarIcon>
            <svg width="58" height="58" viewBox="0 0 58 58" fill="none" stroke={BLUE} strokeWidth="3"><circle cx="29" cy="29" r="27" /><path d="M29 16 V42 M16 29 H42" /></svg>
          </BarIcon>
          加自选
        </BarItem>
      </BottomBar>

      <NavBar>
        <svg width="46" height="44" viewBox="0 0 46 44" fill="#999"><rect x="0" y="7" width="45" height="6" rx="2" /><rect x="0" y="22" width="45" height="6" rx="2" /><rect x="0" y="37" width="45" height="6" rx="2" /></svg>
        <svg width="58" height="44" viewBox="0 0 58 44" fill="none" stroke="#999" strokeWidth="5"><path d="M3 23 L29 3 L55 23" strokeLinecap="round" strokeLinejoin="round" /><path d="M12 24 V41 H46 V24" strokeLinejoin="round" /></svg>
        <svg width="50" height="44" viewBox="0 0 50 44" fill="none" stroke="#999" strokeWidth="5"><path d="M4 10 H46 V41 H12" strokeLinejoin="round" /><path d="M12 2 L2 10 L5 19 L12 13 Z" fill="#999" stroke="none" /></svg>
      </NavBar>
    </Page>
  );
}
